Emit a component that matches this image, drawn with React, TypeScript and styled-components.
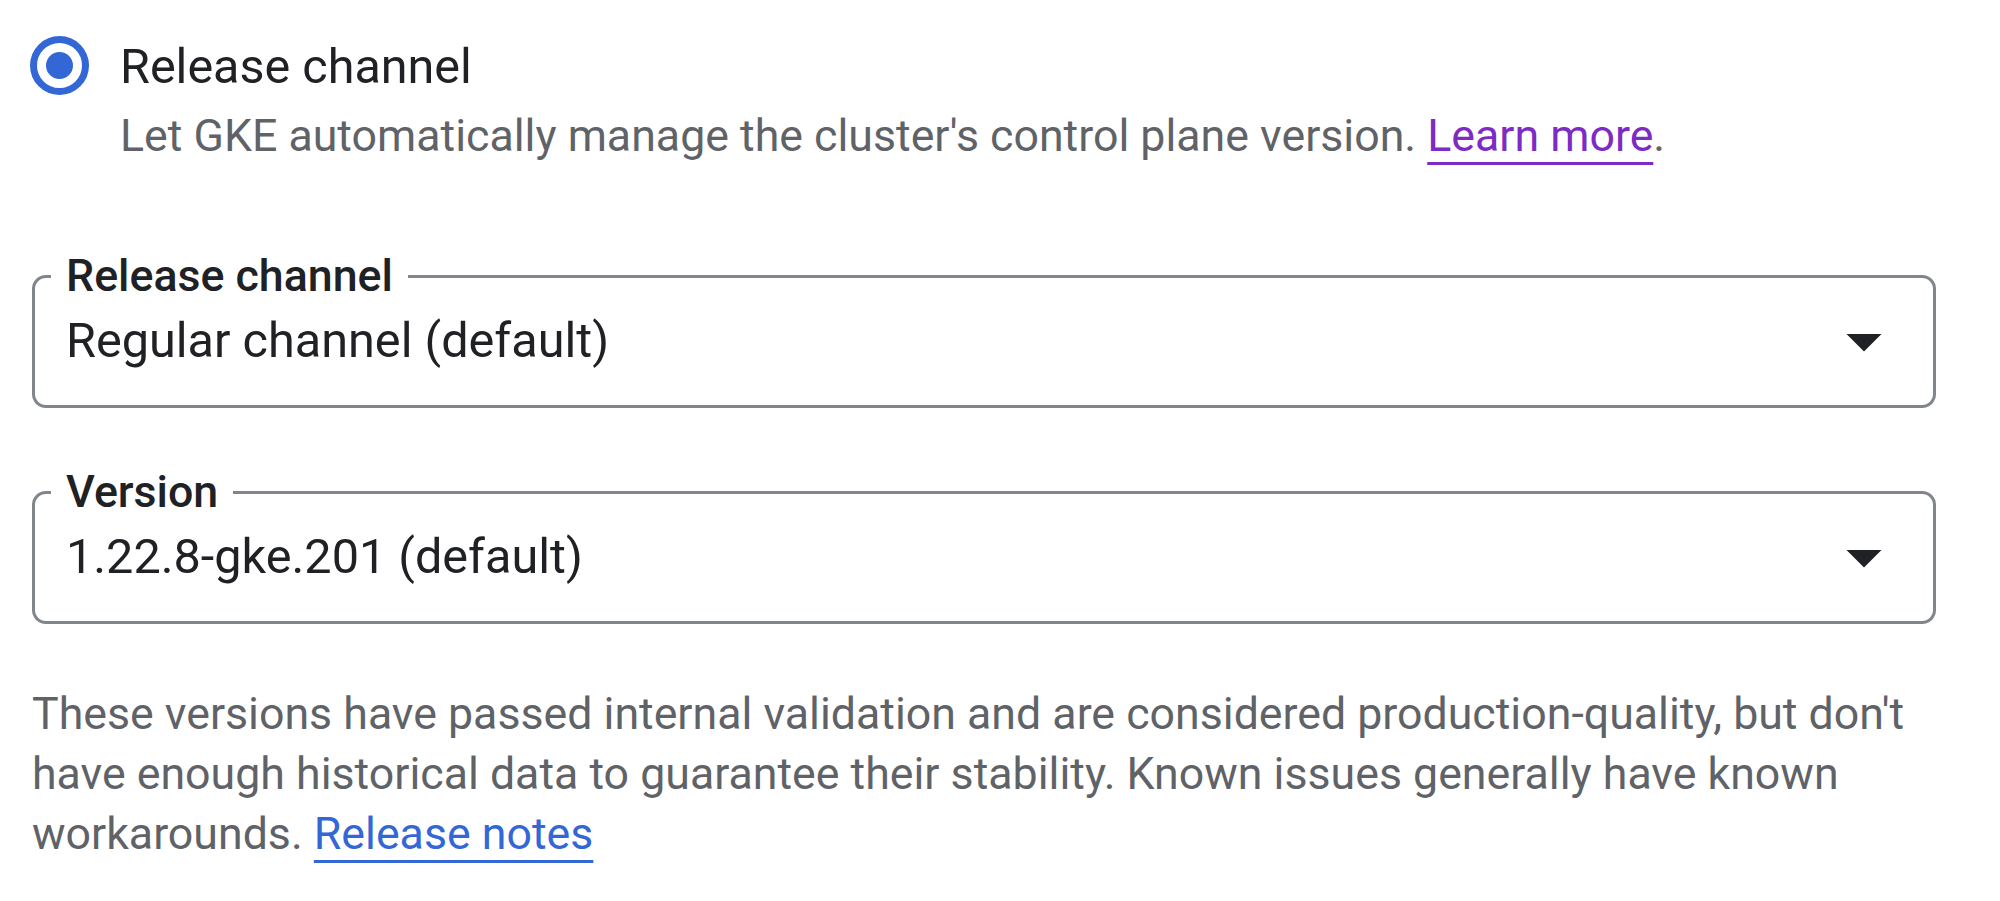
import React from 'react';
import styled, { createGlobalStyle } from 'styled-components';

const GlobalStyle = createGlobalStyle`
  html, body {
    margin: 0;
    padding: 0;
    background: #ffffff;
  }

  body {
    font-family: Roboto, "Liberation Sans", Arial, sans-serif;
    color: #202124;
    -webkit-font-smoothing: antialiased;
  }
`;

const ArrowDropDown = () => (
  <svg width="84" height="84" viewBox="0 0 24 24" aria-hidden="true">
    <path d="M7 10l5 5 5-5z" fill="#202124" />
  </svg>
);

type SelectProps = {
  label: string;
  value: string;
};

const SelectField = ({ label, value }: SelectProps) => (
  <Outline>
    <Legend>{label}</Legend>
    <FieldRow>
      <Value>{value}</Value>
      <ArrowDropDown />
    </FieldRow>
  </Outline>
);

const App = () => (
  <>
    <GlobalStyle />
    <Page>
      <RadioRow>
        <Radio>
          <RadioDot />
        </Radio>
        <RadioText>
          <RadioTitle>Release channel</RadioTitle>
          <RadioHint>
            Let GKE automatically manage the cluster&apos;s control plane version.{' '}
            <VisitedLink href="#">Learn more</VisitedLink>.
          </RadioHint>
        </RadioText>
      </RadioRow>

      <Fields>
        <SelectField label="Release channel" value="Regular channel (default)" />
        <SelectField label="Version" value="1.22.8-gke.201 (default)" />
      </Fields>

      <Note>
        These versions have passed internal validation and are considered
        production-quality, but don&apos;t have enough historical data to guarantee
        their stability. Known issues generally have known workarounds.{' '}
        <NoteLink href="#">Release notes</NoteLink>
      </Note>
    </Page>
  </>
);

export default App;

const Page = styled.div`
  width: 1904px;
  padding: 37px 0 0 32px;
`;

const RadioRow = styled.div`
  display: flex;
  align-items: flex-start;
  gap: 31px;
`;

const Radio = styled.div`
  display: flex;
  align-items: center;
  justify-content: center;
  box-sizing: border-box;
  flex: none;
  width: 59px;
  height: 59px;
  margin: -1px 0 0 -2px;
  border: 7px solid #3367d6;
  border-radius: 50%;
`;

const RadioDot = styled.div`
  width: 27px;
  height: 27px;
  border-radius: 50%;
  background: #3367d6;
`;

const RadioText = styled.div`
  display: flex;
  flex-direction: column;
`;

const RadioTitle = styled.div`
  font-size: 48.5px;
  line-height: 60px;
  color: #202124;
`;

const RadioHint = styled.div`
  margin-top: 9px;
  font-size: 44.7px;
  line-height: 60px;
  color: #5f6368;
`;

const VisitedLink = styled.a`
  color: #7e2bc4;
  text-decoration: underline;
  text-decoration-thickness: 3px;
  text-underline-offset: 11px;
`;

const Fields = styled.div`
  display: flex;
  flex-direction: column;
  gap: 60px;
  margin-top: 86px;
`;

const Outline = styled.fieldset`
  box-sizing: border-box;
  height: 156px;
  margin: 0;
  padding: 0 27px 0 31px;
  border: 3px solid #80868b;
  border-radius: 14px;
`;

const Legend = styled.legend`
  margin-left: -15px;
  padding: 0 15px;
  font-size: 44.7px;
  font-weight: 500;
  line-height: 48px;
  color: #202124;
`;

const FieldRow = styled.div`
  display: flex;
  align-items: center;
  height: 84px;
  margin-top: -1px;
`;

const Value = styled.div`
  flex: 1;
  font-size: 48.6px;
  line-height: 60px;
  color: #202124;
`;

const Note = styled.p`
  margin: 60px 0 0;
  font-size: 44.7px;
  line-height: 60px;
  color: #5f6368;
`;

const NoteLink = styled.a`
  color: #3367d6;
  text-decoration: underline;
  text-decoration-thickness: 3px;
  text-underline-offset: 11px;
`;
